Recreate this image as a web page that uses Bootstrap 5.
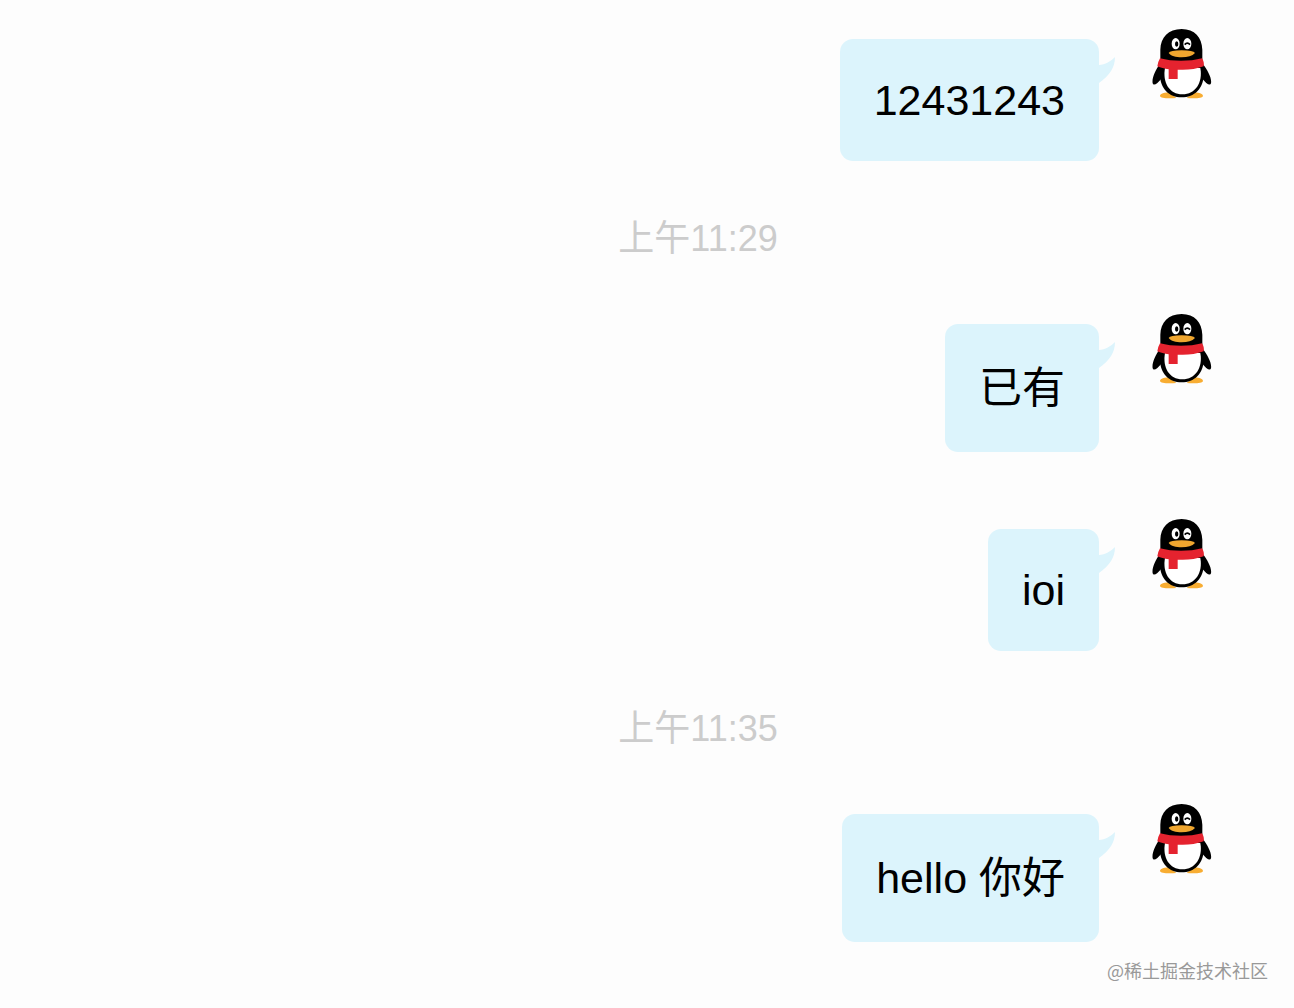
<!DOCTYPE html>
<html lang="zh-CN">
<head>
<meta charset="utf-8">
<meta name="viewport" content="width=device-width, initial-scale=1">
<title>聊天</title>
<link href="https://cdn.jsdelivr.net/npm/bootstrap@5.3.0/dist/css/bootstrap.min.css" rel="stylesheet">
<style>
  body {
    background: #fdfdfd;
    color: #000;
    font-family: "Liberation Sans", "Noto Sans CJK SC", sans-serif;
  }
  .chat-log { padding: 29px 82px 0 184px; }
  .chat-row { gap: 53px; }
  .chat-row + .chat-row { margin-top: 67px; }
  .bubble {
    margin-top: 10px;
    padding: 36px 34px;
    border-radius: 13px;
    background: #dcf4fc;
    font-size: 43px;
    line-height: 50px;
  }
  .bubble-han { line-height: 56px; }
  .bubble-tail { top: 18px; left: 100%; width: 17px; height: 28px; }
  .avatar { width: 60px; height: 70px; }
  .chat-time {
    margin: 56px 0 54px;
    color: #ccc;
    font-size: 36px;
    line-height: 43px;
  }
  .credit {
    padding: 15px 26px 0 0;
    color: #999;
    font-family: "Noto Sans CJK SC", sans-serif;
    font-size: 18px;
    line-height: 26px;
  }
</style>
</head>
<body>
<svg class="d-none" aria-hidden="true">
  <symbol id="penguin" viewBox="67 57 180 210">
    <path d="M91 258C91 251 104 247 120 248L140 264C122 266 91 266 91 258ZM220 258C220 251 207 247 191 248L171 264C189 266 220 266 220 258Z" fill="#f8ad32"/>
    <path d="M90 163C77 181 66 205 69 220C72 229 84 220 95 206L108 170ZM220 163C234 181 247 205 244 220C241 229 229 220 218 206L204 170Z" fill="#000"/>
    <path d="M156 57C116 57 93 83 92 119V149L91 195C92 236 118 262 156 262C195 262 221 236 222 195L218 149V119C217 83 195 57 156 57Z" fill="#000"/>
    <path d="M106 174H212C220 218 197 253 158 253C119 253 98 218 106 174Z" fill="#fff"/>
    <path d="M91 145C128 155 180 155 217 145C222 153 224 161 222 169C198 178 170 181 144 179V207H117V178C104 176 93 173 83 169Q84 157 91 145Z" fill="#e5232f"/>
    <ellipse cx="138" cy="101" rx="12" ry="17" fill="#fff"/>
    <ellipse cx="173" cy="101" rx="12" ry="17" fill="#fff"/>
    <ellipse cx="141" cy="102" rx="5" ry="8" fill="#000"/>
    <path d="M165 104Q173 95 181 104" fill="none" stroke="#000" stroke-width="5"/>
    <path d="M117 129Q121 121 156 121Q191 121 196 129C188 138 174 142 156 142C138 142 124 138 117 129Z" fill="#efa62f"/>
  </symbol>
  <symbol id="tail" viewBox="0 0 17 28">
    <path d="M0 8C6 8 12 4 16 0C16 11 10 19 0 26Z" fill="#dcf4fc"/>
  </symbol>
</svg>

<main class="chat-log d-flex flex-column">
  <div class="chat-row d-flex justify-content-end align-items-start">
    <div class="bubble position-relative">12431243<svg class="bubble-tail position-absolute" aria-hidden="true"><use href="#tail"/></svg></div>
    <svg class="avatar flex-shrink-0" role="img" aria-label="QQ"><use href="#penguin"/></svg>
  </div>
  <time class="chat-time text-center">上午11:29</time>
  <div class="chat-row d-flex justify-content-end align-items-start">
    <div class="bubble bubble-han position-relative">已有<svg class="bubble-tail position-absolute" aria-hidden="true"><use href="#tail"/></svg></div>
    <svg class="avatar flex-shrink-0" role="img" aria-label="QQ"><use href="#penguin"/></svg>
  </div>
  <div class="chat-row d-flex justify-content-end align-items-start">
    <div class="bubble position-relative">ioi<svg class="bubble-tail position-absolute" aria-hidden="true"><use href="#tail"/></svg></div>
    <svg class="avatar flex-shrink-0" role="img" aria-label="QQ"><use href="#penguin"/></svg>
  </div>
  <time class="chat-time text-center">上午11:35</time>
  <div class="chat-row d-flex justify-content-end align-items-start">
    <div class="bubble bubble-han position-relative">hello 你好<svg class="bubble-tail position-absolute" aria-hidden="true"><use href="#tail"/></svg></div>
    <svg class="avatar flex-shrink-0" role="img" aria-label="QQ"><use href="#penguin"/></svg>
  </div>
</main>
<footer class="credit text-end">@稀土掘金技术社区</footer>

<script src="https://cdn.jsdelivr.net/npm/bootstrap@5.3.0/dist/js/bootstrap.bundle.min.js"></script>
</body>
</html>
